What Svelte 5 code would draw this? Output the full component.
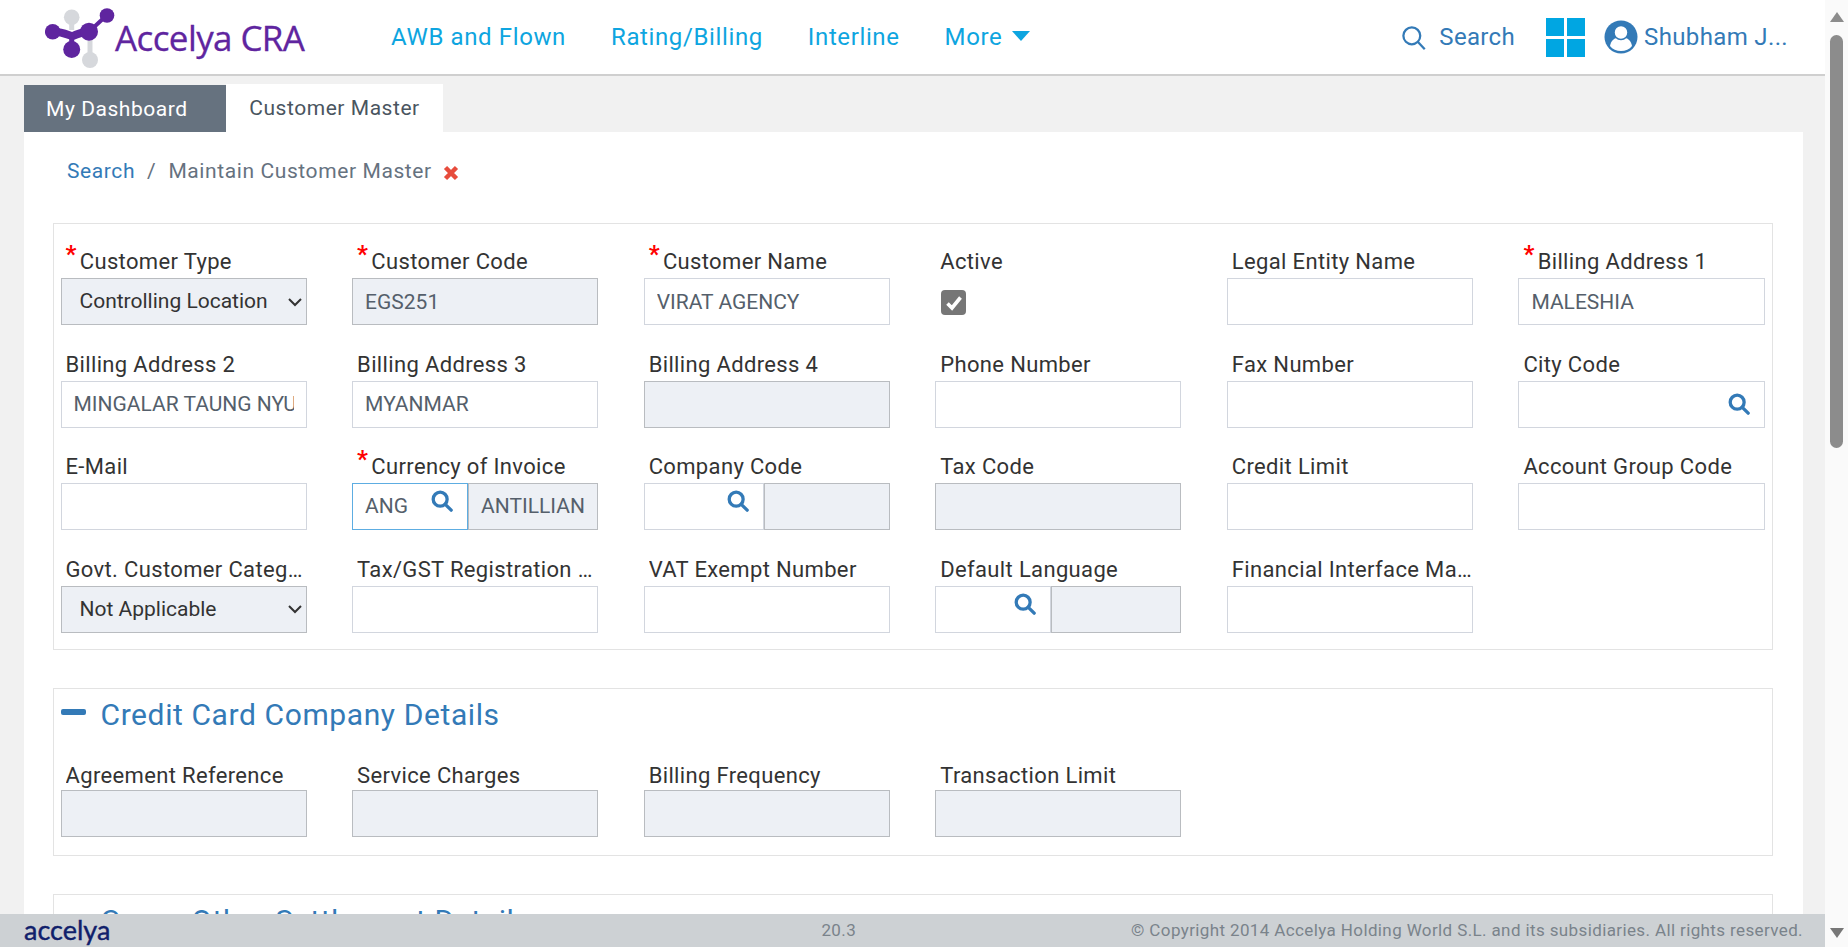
<script>
  // Campos del formulario principal, fila por fila
  const fields = [
    { label: 'Customer Type', req: true, type: 'select', value: 'Controlling Location' },
    { label: 'Customer Code', req: true, value: 'EGS251', off: true },
    { label: 'Customer Name', req: true, value: 'VIRAT AGENCY' },
    { label: 'Active', type: 'check' },
    { label: 'Legal Entity Name' },
    { label: 'Billing Address 1', req: true, value: 'MALESHIA' },
    { label: 'Billing Address 2', value: 'MINGALAR TAUNG NYUNT' },
    { label: 'Billing Address 3', value: 'MYANMAR' },
    { label: 'Billing Address 4', off: true },
    { label: 'Phone Number' },
    { label: 'Fax Number' },
    { label: 'City Code', type: 'lookup' },
    { label: 'E-Mail' },
    { label: 'Currency of Invoice', req: true, type: 'pair', value: 'ANG', desc: 'ANTILLIAN', focus: true },
    { label: 'Company Code', type: 'pair', wide: true },
    { label: 'Tax Code', off: true },
    { label: 'Credit Limit' },
    { label: 'Account Group Code' },
    { label: 'Govt. Customer Category', type: 'select', value: 'Not Applicable' },
    { label: 'Tax/GST Registration Number' },
    { label: 'VAT Exempt Number' },
    { label: 'Default Language', type: 'pair' },
    { label: 'Financial Interface Mapping' }
  ];

  const cardFields = ['Agreement Reference', 'Service Charges', 'Billing Frequency', 'Transaction Limit'];
  const nav = ['AWB and Flown', 'Rating/Billing', 'Interline'];
</script>

{#snippet lens(size)}
  <svg class="lens" width={size} height={size} viewBox="0 0 24 24" fill="none" stroke="currentColor" stroke-width="3.6"><circle cx="10" cy="10" r="7.6"/><path d="M15.6 15.6 22 22" stroke-linecap="round"/></svg>
{/snippet}

<div class="page">
  <div class="left">
    <header>
      <div class="logo">
        <svg width="70" height="60" viewBox="0 0 70 60">
          <path d="M26.700 9V22" stroke="#d6d8dc" stroke-width="5"/>
          <path d="M45 52V30" stroke="#d6d8dc" stroke-width="5"/>
          <circle cx="26.700" cy="9.300" r="7.800" fill="#d6d8dc"/>
          <circle cx="45" cy="52" r="8" fill="#d6d8dc"/>
          <path d="M8 23.700C20 23.700 24 28 27 28S34 23.700 44 23.700" stroke="#5f259f" stroke-width="8" fill="none"/>
          <path d="M44 23.700 62 7" stroke="#5f259f" stroke-width="4"/>
          <path d="M26.700 41V28" stroke="#5f259f" stroke-width="5"/>
          <circle cx="7.700" cy="23.700" r="7.800" fill="#5f259f"/>
          <circle cx="44" cy="23.700" r="9" fill="#5f259f"/>
          <circle cx="26.700" cy="41.500" r="8.500" fill="#5f259f"/>
          <circle cx="62" cy="7.500" r="7.300" fill="#5f259f"/>
        </svg>
        <span>Accelya CRA</span>
      </div>
      <nav>
        {#each nav as item}
          <a href="#top">{item}</a>
        {/each}
        <a href="#top">More <i class="caret"></i></a>
      </nav>
      <div class="tools">
        <span class="find">
          <svg width="27" height="27" viewBox="0 0 24 24" fill="none" stroke="currentColor" stroke-width="2"><circle cx="10.500" cy="10.500" r="7.500"/><path d="M16 16l6 6.500"/></svg>
          Search
        </span>
        <div class="tiles"><b></b><b></b><b></b><b></b></div>
        <svg class="avatar" width="34" height="34" viewBox="0 0 34 34">
          <circle cx="17" cy="17" r="16.500" fill="#337ab7"/>
          <path d="M6 26c1-6 5-8 8-8.500h6c3 .5 7 2.500 8 8.500c-2.500 3.500-6.500 5-11 5s-8.500-1.500-11-5z" fill="#fff"/>
          <circle cx="17" cy="12.500" r="7" fill="#fff" stroke="#337ab7" stroke-width="1.500"/>
        </svg>
        <span class="user">Shubham J...</span>
      </div>
    </header>

    <main>
      <div class="tabs">
        <div class="tab dark">My Dashboard</div>
        <div class="tab light">Customer Master</div>
      </div>
      <div class="panel">
        <div class="crumbs">
          <a href="#top">Search</a><span class="sep">/</span><span>Maintain Customer Master</span>
          <svg width="16" height="16" viewBox="0 0 16 16"><path d="M2.500 2.500l11 11M13.500 2.500l-11 11" stroke="#e74c3c" stroke-width="4.500"/></svg>
        </div>

        <section class="card first">
          <div class="grid">
            {#each fields as f}
              <div class="field">
                <label>{#if f.req}<em>*</em>{/if}<span>{f.label}</span></label>
                {#if f.type === 'select'}
                  <select><option>{f.value}</option></select>
                {:else if f.type === 'check'}
                  <div class="check">
                    <svg width="20" height="20" viewBox="0 0 20 20"><path d="M3.500 10.500l4.500 4.500 8.500-10.500" fill="none" stroke="#fff" stroke-width="3.600"/></svg>
                  </div>
                {:else if f.type === 'lookup'}
                  <div class="box lookup">{@render lens(22)}</div>
                {:else if f.type === 'pair'}
                  <div class="pair">
                    <div class="box code" class:focus={f.focus} class:wide={f.wide}>{f.value ?? ''}{@render lens(22)}</div>
                    <div class="box off desc">{f.desc ?? ''}</div>
                  </div>
                {:else}
                  <input class="box" class:off={f.off} readonly value={f.value ?? ''} />
                {/if}
              </div>
            {/each}
          </div>
        </section>

        <section class="card">
          <h3><i class="minus"></i>Credit Card Company Details</h3>
          <div class="grid">
            {#each cardFields as label}
              <div class="field">
                <label><span>{label}</span></label>
                <input class="box off" readonly value="" />
              </div>
            {/each}
          </div>
        </section>

        <section class="card">
          <h3><i class="minus"></i>Cargo Other Settlement Details</h3>
        </section>
      </div>
    </main>

    <footer>
      <span class="brand">accelya</span>
      <span class="ver">20.3</span>
      <span class="copy">© Copyright 2014 Accelya Holding World S.L. and its subsidiaries. All rights reserved.</span>
    </footer>
  </div>

  <div class="scroll">
    <i class="up"></i>
    <div class="thumb"></div>
    <i class="down"></i>
  </div>
</div>

<style>
  :global(body) {
    margin: 0;
    font-family: Roboto, "Liberation Sans", sans-serif;
  }

  .page {
    display: flex;
    height: 947px;
    overflow: hidden;
  }

  .left {
    width: 1825px;
    display: flex;
    flex-direction: column;
    background: #f1f1f1;
  }

  /* Barra superior */
  header {
    height: 74px;
    flex-shrink: 0;
    background: #fff;
    border-bottom: 2px solid #cfcfcf;
    display: flex;
    align-items: center;
    padding-left: 45px;
  }

  .logo {
    display: flex;
    align-items: center;
    width: 346px;
    height: 74px;
    color: #5f259f;
    font-family: "Open Sans", sans-serif;
    font-size: 35px;
    letter-spacing: -0.6px;
    -webkit-text-stroke: 0.3px #5f259f;
  }

  .logo svg {
    margin-top: 2px;
  }

  nav {
    display: flex;
    gap: 45px;
  }

  nav a {
    color: #0ea5e0;
    font-size: 24px;
    letter-spacing: 0.62px;
    text-decoration: none;
  }

  .caret {
    display: inline-block;
    border: 9px solid transparent;
    border-top: 10px solid #0ea5e0;
    border-bottom: 0;
    vertical-align: 4px;
    margin-left: 3px;
  }

  .tools {
    margin-left: auto;
    display: flex;
    align-items: center;
    color: #337ab7;
    font-size: 24px;
    letter-spacing: 0.35px;
    padding-right: 37px;
  }

  .find {
    display: flex;
    align-items: center;
    gap: 12px;
    margin-right: 31px;
  }

  .tiles {
    display: grid;
    grid-template-columns: 18px 18px;
    grid-template-rows: 18px 18px;
    gap: 3px;
    margin-right: 19px;
  }

  .tiles b {
    background: #00a6e2;
  }

  .user {
    margin-left: 6px;
  }

  /* Zona de contenido */
  main {
    flex: 1;
    min-height: 0;
    overflow: hidden;
    padding: 7px 22px 0 24px;
  }

  .tabs {
    display: flex;
    align-items: flex-end;
    height: 49px;
  }

  .tab {
    font-size: 21px;
    letter-spacing: 0.55px;
    display: flex;
    align-items: center;
    box-sizing: border-box;
  }

  .dark {
    width: 202px;
    height: 47px;
    padding-left: 22px;
    background: #66727f;
    color: #fff;
  }

  .light {
    width: 217px;
    height: 48px;
    justify-content: center;
    background: #fff;
    color: #4a5560;
  }

  .panel {
    background: #fff;
    padding: 0 30px 0 29px;
    min-height: 800px;
  }

  .crumbs {
    height: 91px;
    display: flex;
    align-items: flex-start;
    padding: 27px 0 0 14px;
    box-sizing: border-box;
    font-size: 21px;
    letter-spacing: 0.6px;
    color: #66727f;
  }

  .crumbs a {
    color: #337ab7;
    text-decoration: none;
  }

  .sep {
    margin: 0 12px;
  }

  .crumbs svg {
    margin: 6px 0 0 11px;
  }

  .card {
    border: 1px solid #e3e3e3;
    padding: 0 8px 18px 6.500px;
    margin-bottom: 38px;
  }

  .card.first {
    padding-top: 15px;
    padding-bottom: 0;
  }

  .grid {
    display: grid;
    grid-template-columns: repeat(6, 246.200px);
    column-gap: 45.400px;
  }

  .field {
    min-width: 0;
    height: 102.600px;
  }

  .card:not(.first) .field {
    height: auto;
  }

  label {
    display: flex;
    height: 35px;
    padding: 0 0 4px 5px;
    align-items: flex-end;
    font-size: 22px;
    letter-spacing: 0.35px;
    color: #333;
    white-space: nowrap;
    overflow: hidden;
  }

  .card:not(.first) label {
    height: 37px;
    padding-bottom: 2px;
  }

  label span {
    overflow: hidden;
    text-overflow: ellipsis;
  }

  label em {
    color: #f00;
    font-style: normal;
    font-weight: 700;
    font-size: 24px;
    line-height: 24px;
    align-self: flex-start;
    margin: 3px 3px 0 0;
    flex-shrink: 0;
  }

  .box, select {
    display: block;
    box-sizing: border-box;
    width: 100%;
    height: 47px;
    background: #fff;
    border: 1px solid #d2d6de;
    font: 21px Roboto, sans-serif;
    color: #555f6b;
    line-height: 45px;
    padding: 0 12px;
    white-space: nowrap;
    overflow: hidden;
    outline: none;
  }

  .off {
    background: #edf0f5;
    border-color: #b9bcc0;
  }

  select {
    appearance: none;
    background: #edf0f5 url("data:image/svg+xml,%3Csvg xmlns='http://www.w3.org/2000/svg' width='16' height='10'%3E%3Cpath d='M2 2l6 6 6-6' fill='none' stroke='%23333' stroke-width='2'/%3E%3C/svg%3E") no-repeat right 3px center;
    border-color: #b9bcc0;
    color: #333;
    padding: 0 6px 0 18px;
  }

  .check {
    width: 25px;
    height: 25px;
    margin: 12px 0 0 6px;
    background: #767676;
    border-radius: 4px;
    display: flex;
    align-items: center;
    justify-content: center;
  }

  .lookup {
    display: flex;
    justify-content: flex-end;
    align-items: center;
    padding-right: 14px;
  }

  .lens {
    color: #337ab7;
    flex-shrink: 0;
  }

  .pair {
    display: flex;
  }

  .code {
    width: 116px;
    flex-shrink: 0;
    position: relative;
  }

  .code.wide {
    width: 120px;
  }

  .code .lens {
    position: absolute;
    right: 14px;
    top: 6px;
  }

  .focus {
    border-color: #5dade2;
  }

  .desc {
    flex: 1;
    min-width: 0;
  }

  h3 {
    margin: 0 0 12px;
    display: flex;
    align-items: center;
    height: 50px;
    font-size: 30px;
    font-weight: 400;
    letter-spacing: 0.6px;
    color: #337ab7;
  }

  .minus {
    width: 25px;
    height: 6px;
    border-radius: 2px;
    background: #337ab7;
    margin: 0 15px 5px 0;
  }

  /* Pie de pagina */
  footer {
    height: 33px;
    flex-shrink: 0;
    background: #cdd1d4;
    display: flex;
    align-items: center;
    padding: 0 22px 2px 24px;
    box-sizing: border-box;
    font-size: 17px;
    letter-spacing: 0.38px;
    color: #7a838b;
  }

  .brand {
    font-family: Lato, sans-serif;
    font-size: 27px;
    color: #10206b;
    letter-spacing: 0;
    line-height: 1;
    -webkit-text-stroke: 0.4px #10206b;
  }

  .ver {
    margin-left: 711px;
  }

  .copy {
    margin-left: auto;
  }

  /* Barra de desplazamiento */
  .scroll {
    width: 23px;
    background: #fafafa;
    position: relative;
  }

  .thumb {
    position: absolute;
    left: 5px;
    top: 35px;
    width: 13px;
    height: 413px;
    border-radius: 7px;
    background: #8c8c8c;
  }

  .up, .down {
    position: absolute;
    left: 5px;
    border: 7px solid transparent;
  }

  .up {
    top: 12px;
    border-top: 0;
    border-bottom: 10px solid #8c8c8c;
  }

  .down {
    bottom: 9px;
    border-bottom: 0;
    border-top: 10px solid #777;
  }
</style>
